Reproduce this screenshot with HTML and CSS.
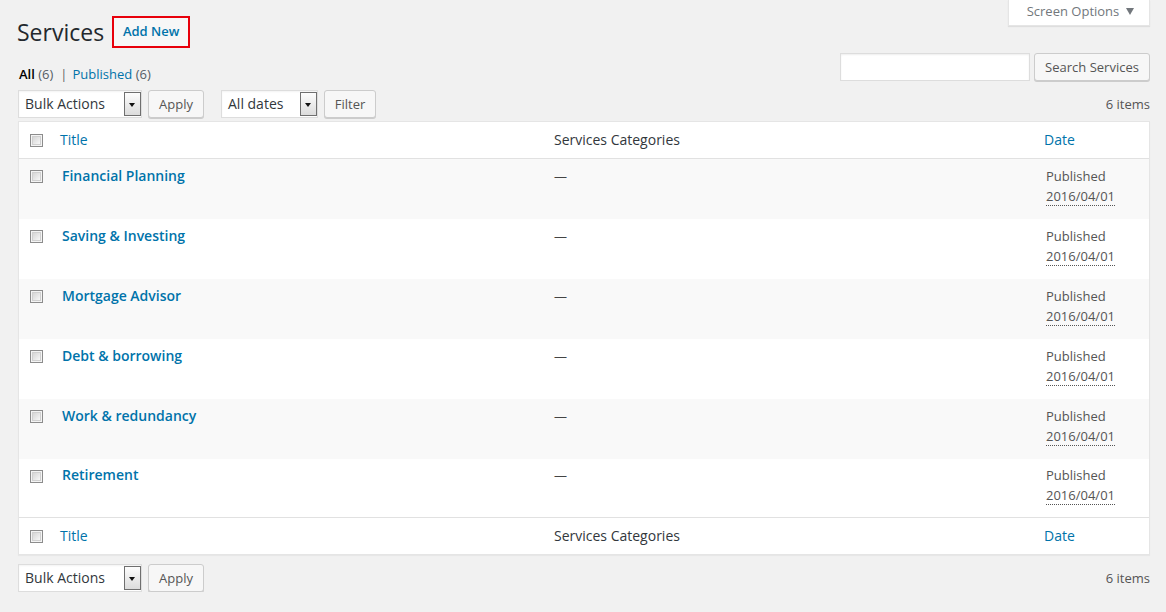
FILE: index.html
```html
<!DOCTYPE html>
<html lang="en">
<head>
<meta charset="utf-8">
<title>Services</title>
<link rel="stylesheet" href="styles.css">
</head>
<body>
<div class="wrap">
  <div class="top-row">
    <h1 class="page-title">Services <a class="add-new" href="#">Add New</a></h1>
    <div class="screen-options">Screen Options <span class="tri"></span></div>
  </div>

  <div class="filter-row">
    <ul class="subsubsub">
      <li><span class="current">All</span> <span class="count">(6)</span></li>
      <li class="sep">|</li>
      <li><a href="#">Published</a> <span class="count">(6)</span></li>
    </ul>
    <div class="search-box">
      <span class="search-input"></span>
      <span class="button">Search Services</span>
    </div>
  </div>

  <div class="tablenav">
    <div class="actions">
      <div class="select w-bulk"><span class="select-label">Bulk Actions</span><span class="select-arrow"></span></div>
      <span class="button b-apply">Apply</span>
      <div class="select w-dates"><span class="select-label">All dates</span><span class="select-arrow"></span></div>
      <span class="button b-filter">Filter</span>
    </div>
    <div class="num-items">6 items</div>
  </div>

  <div class="list-table">
    <div class="row head">
      <div class="cell check"><span class="cb"></span></div>
      <div class="cell title"><a href="#">Title</a></div>
      <div class="cell cats">Services Categories</div>
      <div class="cell date"><a href="#">Date</a></div>
    </div>

    <div class="row item alt">
      <div class="cell check"><span class="cb"></span></div>
      <div class="cell title"><a href="#">Financial Planning</a></div>
      <div class="cell cats">—</div>
      <div class="cell date">Published<br><abbr>2016/04/01</abbr></div>
    </div>
    <div class="row item">
      <div class="cell check"><span class="cb"></span></div>
      <div class="cell title"><a href="#">Saving &amp; Investing</a></div>
      <div class="cell cats">—</div>
      <div class="cell date">Published<br><abbr>2016/04/01</abbr></div>
    </div>
    <div class="row item alt">
      <div class="cell check"><span class="cb"></span></div>
      <div class="cell title"><a href="#">Mortgage Advisor</a></div>
      <div class="cell cats">—</div>
      <div class="cell date">Published<br><abbr>2016/04/01</abbr></div>
    </div>
    <div class="row item">
      <div class="cell check"><span class="cb"></span></div>
      <div class="cell title"><a href="#">Debt &amp; borrowing</a></div>
      <div class="cell cats">—</div>
      <div class="cell date">Published<br><abbr>2016/04/01</abbr></div>
    </div>
    <div class="row item alt">
      <div class="cell check"><span class="cb"></span></div>
      <div class="cell title"><a href="#">Work &amp; redundancy</a></div>
      <div class="cell cats">—</div>
      <div class="cell date">Published<br><abbr>2016/04/01</abbr></div>
    </div>
    <div class="row item last">
      <div class="cell check"><span class="cb"></span></div>
      <div class="cell title"><a href="#">Retirement</a></div>
      <div class="cell cats">—</div>
      <div class="cell date">Published<br><abbr>2016/04/01</abbr></div>
    </div>

    <div class="row head foot">
      <div class="cell check"><span class="cb"></span></div>
      <div class="cell title"><a href="#">Title</a></div>
      <div class="cell cats">Services Categories</div>
      <div class="cell date"><a href="#">Date</a></div>
    </div>
  </div>

  <div class="tablenav bottom">
    <div class="actions">
      <div class="select w-bulk"><span class="select-label">Bulk Actions</span><span class="select-arrow"></span></div>
      <span class="button b-apply">Apply</span>
    </div>
    <div class="num-items">6 items</div>
  </div>
</div>
</body>
</html>
```

FILE: styles.css
```css
* { box-sizing: border-box; }

html, body {
  margin: 0;
  padding: 0;
  background: #f1f1f1;
}

body {
  font-family: "Open Sans", "Liberation Sans", sans-serif;
  font-size: 13px;
  line-height: 1.4;
  color: #444;
}

a { color: #0073aa; text-decoration: none; }

.wrap {
  width: 1166px;
  padding: 0 16px 0 18px;
}

/* top row */
.top-row {
  display: flex;
  justify-content: space-between;
  align-items: flex-start;
  height: 47px;
}

.page-title {
  margin: 0 0 0 -1px;
  padding-top: 16px;
  display: flex;
  align-items: center;
  font-size: 23px;
  font-weight: 400;
  line-height: 32px;
  color: #23282d;
}

.add-new {
  margin-left: 8px;
  height: 32px;
  width: 78px;
  display: inline-flex;
  align-items: center;
  justify-content: center;
  border: 2px solid #e8000b;
  background: #f7f7f7;
  font-size: 13px;
  font-weight: 600;
  color: #0073aa;
  line-height: 1;
  padding-bottom: 1px;
}

.screen-options {
  width: 142px;
  height: 26px;
  background: #fff;
  box-shadow: 0 1px 1px rgba(0,0,0,0.08);
  border: 1px solid #e5e5e5;
  border-top: none;
  color: #72777c;
  font-size: 13px;
  line-height: 23px;
  display: flex;
  align-items: center;
  justify-content: center;
  padding: 0 0 3px 3px;
}

.screen-options .tri {
  display: inline-block;
  width: 0;
  height: 0;
  margin-left: 7px;
  margin-top: 1px;
  border-left: 4.5px solid transparent;
  border-right: 4.5px solid transparent;
  border-top: 7px solid #72777c;
}

/* filter row */
.filter-row {
  display: flex;
  justify-content: space-between;
  align-items: flex-start;
  margin-top: 6px;
  height: 28px;
}

.subsubsub {
  list-style: none;
  margin: 11px 0 0 1px;
  padding: 0;
  display: flex;
  font-size: 13px;
  line-height: 20px;
  color: #666;
}

.subsubsub li { white-space: pre; }
.subsubsub .current { color: #000; font-weight: 600; }
.subsubsub .count { color: #555d66; }
.subsubsub .sep { color: #666; padding: 0 5px 0 7px; }

.search-box {
  display: flex;
  gap: 4px;
}

.search-input {
  display: block;
  width: 190px;
  height: 28px;
  background: #fff;
  border: 1px solid #ddd;
  box-shadow: inset 0 1px 2px rgba(0,0,0,0.07);
}

.button {
  display: inline-flex;
  align-items: center;
  justify-content: center;
  height: 28px;
  padding: 0 10px;
  background: #f7f7f7;
  border: 1px solid #ccc;
  border-radius: 3px;
  box-shadow: 0 1px 0 #ccc;
  color: #555;
  font-size: 13px;
  white-space: nowrap;
}

.search-box .button { width: 116px; padding: 1px 0 0; }

/* tablenav */
.tablenav {
  display: flex;
  justify-content: space-between;
  align-items: center;
  margin-top: 9px;
  height: 28px;
}

.actions {
  display: flex;
  align-items: center;
}

.select {
  display: flex;
  align-items: stretch;
  height: 28px;
  background: #fff;
  border: 1px solid #ddd;
  box-shadow: inset 0 1px 2px rgba(0,0,0,0.05);
}

.select-label {
  flex: 1;
  padding-left: 6px;
  font-size: 14px;
  line-height: 25px;
  color: #32373c;
}

.select-arrow {
  width: 17px;
  margin: 1px 0;
  border: 1px solid #6f6f6f;
  background: linear-gradient(#fdfdfd, #dcdcdc);
  position: relative;
}

.select-arrow::after {
  content: "";
  position: absolute;
  left: 4px;
  top: 10px;
  border-left: 3.5px solid transparent;
  border-right: 3.5px solid transparent;
  border-top: 4px solid #111;
}

.w-bulk { width: 124px; }
.w-dates { width: 97px; margin-left: 17px; }
.b-apply { margin-left: 6px; width: 56px; padding: 1px 0 0; }
.b-filter { margin-left: 6px; width: 52px; padding: 1px 0 0; }

.num-items {
  color: #555;
  font-size: 13px;
  padding-top: 1px;
}

/* table */
.list-table {
  margin-top: 3px;
  background: #fff;
  border: 1px solid #e5e5e5;
  box-shadow: 0 1px 1px rgba(0,0,0,0.04);
}

.row {
  display: grid;
  grid-template-columns: 41px 494px 490px 1fr;
}

.row.head {
  height: 37px;
  border-bottom: 1px solid #e1e1e1;
  align-items: center;
  font-size: 14px;
  color: #32373c;
}

.row.foot {
  border-bottom: none;
  border-top: 1px solid #e1e1e1;
}

.row.item {
  height: 60px;
  font-size: 13px;
  color: #555;
  align-items: start;
}

.row.item.last { height: 58px; }
.row.item.last .cell.title,
.row.item.last .cell.cats,
.row.item.last .cell.date { padding-top: 6px; }

.row.alt { background: #f9f9f9; }

.cell.check {
  display: flex;
  padding-left: 11px;
}

.row.head .cell.check { padding-top: 1px; }
.row.item .cell.check { padding-top: 11px; }

.row.item .cell.title,
.row.item .cell.cats,
.row.item .cell.date { padding-top: 7px; line-height: 20px; }

.row.item .cell.title { padding-left: 2px; }
.row.item .cell.date { padding-left: 2px; }

.row.item .cell.title a {
  font-size: 14px;
  font-weight: 600;
  color: #0073aa;
}

.row.head .cell.title a,
.row.head .cell.date a { color: #0073aa; }

.cell.cats { color: #444; }
.row.head .cell.cats { color: #32373c; }

abbr {
  text-decoration: none;
  border-bottom: 1px dotted #555;
}

.cb {
  display: block;
  width: 13px;
  height: 13px;
  border: 1px solid #8c8c8c;
  background: #f4f4f4;
  position: relative;
}

.cb::after {
  content: "";
  position: absolute;
  left: 1px;
  top: 1px;
  right: 1px;
  bottom: 1px;
  border: 1px solid #d0d0d0;
  background: linear-gradient(135deg, #d6d6d6, #f7f7f7);
}
```
